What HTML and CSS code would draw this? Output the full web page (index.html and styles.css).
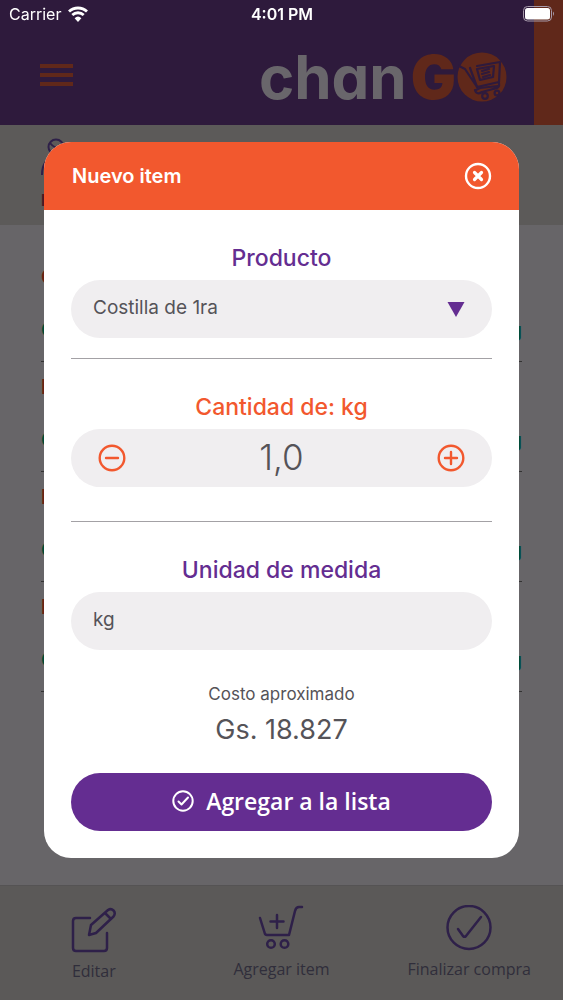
FILE: index.html
```html
<!DOCTYPE html>
<html lang="es">
<head>
<meta charset="utf-8">
<meta name="viewport" content="width=device-width, initial-scale=1">
<title>chanGO</title>
<link rel="stylesheet" href="styles.css">
</head>
<body>
<div class="screen">
  <header class="topbar">
    <div class="topbar-main">
      <button class="menu" type="button" aria-label="Menú"><span></span><span></span><span></span></button>
      <div class="logo">
        <span class="logo-chan">chan</span><span class="logo-g">G</span>
        <svg class="logo-o" viewBox="0 0 50 50" aria-hidden="true">
          <circle cx="25" cy="25" r="24.500" fill="#60281a"/>
          <g fill="none" stroke="#2e1a3c" stroke-width="2.200" stroke-linecap="round" stroke-linejoin="round">
            <path d="M2 14l6 3 12 18 22-5 1-20-23 4M20 35l-7-19"/>
            <path d="M20 17l17-3-1 11-13 3zM25 19l7-2M25 22l7-2M26 25l7-2M19 38l4-2 18-2M18 38c1 4 4 4 7 2l11-3c4-1 7-1 6-6"/>
            <circle cx="28" cy="44" r="2.800"/><circle cx="40" cy="41" r="2.400"/>
          </g>
        </svg>
      </div>
    </div>
    <div class="topbar-edge"></div>
  </header>

  <section class="profile">
    <svg class="profile-icon" viewBox="0 0 30 38" fill="none" stroke="#2e2049" stroke-width="2" aria-hidden="true">
      <circle cx="15" cy="9" r="7.500"/><path d="M9 5c4 5 8 6 13 5M1 37c0-12 5-17 14-17s14 5 14 17"/>
    </svg>
    <span class="profile-name">L</span>
  </section>

  <main class="list">
    <div class="row"><span class="row-name">C</span><div class="row-info"><span>G</span><span>g</span></div></div>
    <div class="row"><span class="row-name">P</span><div class="row-info"><span>G</span><span>g</span></div></div>
    <div class="row"><span class="row-name">P</span><div class="row-info"><span>G</span><span>g</span></div></div>
    <div class="row"><span class="row-name">P</span><div class="row-info"><span>G</span><span>g</span></div></div>
  </main>

  <nav class="tabs">
    <button class="tab tab-edit" type="button">
      <svg viewBox="0 0 46 46" aria-hidden="true">
        <path d="M19 11H5q-3 0-3 3v27q0 3 3 3h28q3 0 3-3V26"/>
        <path d="M18 28l2-10L37 3q3-2 5.500.500t0 6L25 26zM34 6l6 6"/>
      </svg>
      <span>Editar</span>
    </button>
    <button class="tab" type="button">
      <svg viewBox="0 0 46 46" aria-hidden="true">
        <path d="M2 13l5 16q1 1 2 1h22L37 6q1-4 4-4h3M19 10v13M12.500 16.500h13"/>
        <circle cx="13" cy="39" r="3.800"/><circle cx="26.500" cy="39" r="3.800"/>
      </svg>
      <span>Agregar item</span>
    </button>
    <button class="tab" type="button">
      <svg viewBox="0 0 46 46" aria-hidden="true">
        <circle cx="23" cy="22.500" r="21.500"/><path d="M12 24l5 7q1.500 1.500 3 0L35 12"/>
      </svg>
      <span>Finalizar compra</span>
    </button>
  </nav>
</div>

<div class="status">
  <div class="status-left">
    <span>Carrier</span>
    <svg class="wifi" viewBox="0 0 20 16" aria-hidden="true">
      <g fill="none" stroke="#fff" stroke-width="2.800"><path d="M1 5.600a13 13 0 0 1 18 0M4.300 9a8.300 8.300 0 0 1 11.400 0"/></g>
      <path d="M10 16l-3.400-3.800a5 5 0 0 1 6.800 0z" fill="#fff"/>
    </svg>
  </div>
  <span class="status-time">4:01 PM</span>
  <svg class="battery" viewBox="0 0 32 16" aria-hidden="true">
    <rect x="0.500" y="0.500" width="28" height="14.500" rx="4" fill="none" stroke="#a79bab"/>
    <rect x="2" y="2" width="25" height="11.500" rx="2.500" fill="#fff"/>
    <path d="M30 5.500q2 2.200 0 4.500z" fill="#a79bab"/>
  </svg>
</div>

<div class="overlay">
  <form class="modal" role="dialog" aria-labelledby="modal-title">
    <div class="modal-head">
      <h1 id="modal-title">Nuevo item</h1>
      <button class="icon-button" type="button" aria-label="Cerrar">
        <svg viewBox="0 0 28 28" aria-hidden="true"><circle cx="14" cy="14" r="12"/><path class="thick" d="M10.500 10.500l7 7M17.500 10.500l-7 7"/></svg>
      </button>
    </div>
    <div class="modal-body">
      <div class="field field-product">
        <label for="product">Producto</label>
        <div class="pill">
          <select id="product"><option>Costilla de 1ra</option></select>
          <svg class="arrow" viewBox="0 0 18 15" aria-hidden="true"><path d="M0.500 0h17L9 15z" fill="#642d91"/></svg>
        </div>
      </div>
      <div class="field field-amount">
        <label for="amount">Cantidad de: kg</label>
        <div class="pill stepper">
          <button class="icon-button" type="button" aria-label="Menos">
            <svg viewBox="0 0 28 28" aria-hidden="true"><circle cx="14" cy="14" r="12.300"/><path d="M8 14h12"/></svg>
          </button>
          <input id="amount" type="text" value="1,0">
          <button class="icon-button" type="button" aria-label="Más">
            <svg viewBox="0 0 28 28" aria-hidden="true"><circle cx="14" cy="14" r="12.300"/><path d="M8 14h12M14 8v12"/></svg>
          </button>
        </div>
      </div>
      <div class="field">
        <label for="unit">Unidad de medida</label>
        <div class="pill"><input id="unit" type="text" value="kg"></div>
      </div>
      <div class="cost">
        <span class="cost-label">Costo aproximado</span>
        <span class="cost-value">Gs. 18.827</span>
      </div>
      <button class="submit" type="submit">
        <svg viewBox="0 0 22 22" aria-hidden="true"><circle cx="11" cy="11" r="9.700"/><path d="M6.500 11.500l3 3 6.500-7"/></svg>
        <span>Agregar a la lista</span>
      </button>
    </div>
  </form>
</div>
</body>
</html>
```
FILE: styles.css
```css
* { box-sizing: border-box; }

body {
  margin: 0;
  font-family: Inter, "Liberation Sans", sans-serif;
  background: #676568;
}

button, input, select {
  font: inherit;
  color: inherit;
  background: none;
  border: 0;
  margin: 0;
  padding: 0;
}

svg { display: block; flex: none; }

.screen {
  display: flex;
  flex-direction: column;
  min-height: 100vh;
}

.topbar { display: flex; background: #2e1a3c; height: 125px; }
.topbar-edge { width: 29px; background: #60281a; }
.topbar-main {
  flex: 1;
  display: flex;
  align-items: flex-start;
  justify-content: space-between;
  padding: 52px 27px 0 40px;
}

.menu { display: grid; gap: 5px; width: 33px; padding-top: 12px; }
.menu span { height: 4px; background: #60281a; }

.logo {
  display: flex;
  align-items: center;
  height: 50px;
  font-size: 60px;
  line-height: 50px;
  font-weight: 700;
}
.logo-chan { color: #69666b; font-feature-settings: "cv11"; }
.logo-g { margin: 0 1px 0 4px; color: #60281a; font-weight: 900; }
.logo-o { width: 50px; height: 50px; }

.profile {
  display: flex;
  flex-direction: column;
  align-items: flex-start;
  height: 100px;
  padding: 13px 41px 0;
  background: #5c5a59;
}
.profile-icon { width: 30px; height: 38px; }
.profile-name { margin-top: 12px; font-size: 16px; line-height: 24px; font-weight: 700; color: #4a1825; }

.list { flex: 1; padding: 27px 41px 0; }
.row {
  height: 110px;
  padding-top: 9px;
  border-bottom: 1px solid #333;
  font-size: 20px;
  line-height: 32px;
}
.row-name { display: block; font-weight: 700; color: #6b2013; }
.row-info { display: flex; justify-content: space-between; margin-top: 21px; color: #004a36; font-weight: 600; }

.tabs {
  display: grid;
  grid-template-columns: repeat(3, 1fr);
  height: 115px;
  background: #5b5958;
  border-top: 1px solid #555354;
}
.tab {
  display: flex;
  flex-direction: column;
  align-items: center;
  padding-top: 19px;
  font-family: "Open Sans", sans-serif;
  font-size: 16px;
  line-height: 24px;
  color: #302e3b;
  white-space: nowrap;
}
.tab-edit { padding-top: 21px; }
.tab svg {
  width: 46px;
  height: 46px;
  margin-bottom: 6px;
  fill: none;
  stroke: #2e2049;
  stroke-width: 2.5;
  stroke-linecap: round;
  stroke-linejoin: round;
}

.status {
  position: fixed;
  z-index: 2;
  inset: 0 0 auto;
  display: grid;
  grid-template-columns: 1fr auto 1fr;
  align-items: center;
  height: 28px;
  padding: 0 8px 0 9px;
  font-size: 16px;
  color: #fff;
}
.status-left { display: flex; align-items: center; gap: 7px; }
.status-time { font-weight: 600; }
.wifi { width: 20px; height: 16px; }
.battery { width: 32px; height: 16px; justify-self: end; }

.overlay {
  position: fixed;
  inset: 0;
  display: flex;
  align-items: center;
  justify-content: center;
  padding: 0 44px;
}
.modal {
  flex: 1;
  overflow: hidden;
  border-radius: 27px;
  background: #fff;
  color: #555358;
}
.modal-head {
  display: flex;
  align-items: center;
  justify-content: space-between;
  height: 68px;
  padding: 0 27px 0 28px;
  background: #f2582e;
  color: #fff;
}
.modal-head h1 { margin: 0; font-size: 20px; font-weight: 600; }
.modal-body { padding: 0 27px 27px; }

.icon-button { width: 28px; height: 28px; flex: none; }
.icon-button svg {
  width: 28px;
  height: 28px;
  fill: none;
  stroke: currentColor;
  stroke-width: 2.4;
  stroke-linecap: round;
}
.icon-button .thick { stroke-width: 3.2; }

.field { padding-top: 32px; }
.field label {
  display: block;
  margin-bottom: 6px;
  text-align: center;
  font-size: 23px;
  line-height: 32px;
  font-weight: 500;
  color: #642d91;
}
.field-product { padding-bottom: 20px; border-bottom: 1px solid #a3a1a5; }
.field-amount { padding-bottom: 34px; border-bottom: 1px solid #a3a1a5; }
.field-amount label { color: #f2582e; }

.pill {
  display: flex;
  align-items: center;
  height: 58px;
  padding: 0 27px 0 22px;
  border-radius: 29px;
  background: #f0eef0;
  font-size: 19px;
}
.pill select, .pill input { flex: 1; min-width: 0; padding-bottom: 3px; }
.pill select { appearance: none; }
.arrow { width: 18px; height: 15px; }
.stepper { padding: 0 27px; color: #f2582e; }
.stepper input { color: #555358; text-align: center; font-size: 35px; font-weight: 300; }

.cost { display: flex; flex-direction: column; align-items: center; gap: 6px; padding: 32px 0 25px; }
.cost-label { font-size: 17px; line-height: 24px; }
.cost-value { font-size: 27px; line-height: 36px; }

.submit {
  display: flex;
  align-items: center;
  justify-content: center;
  gap: 12px;
  width: 100%;
  height: 58px;
  padding-bottom: 2px;
  border-radius: 29px;
  background: #642d91;
  color: #fff;
  font-family: "Open Sans", sans-serif;
  font-size: 23px;
  font-weight: 600;
}
.submit svg {
  width: 22px;
  height: 22px;
  fill: none;
  stroke: currentColor;
  stroke-width: 2;
  stroke-linecap: round;
  stroke-linejoin: round;
}
```
